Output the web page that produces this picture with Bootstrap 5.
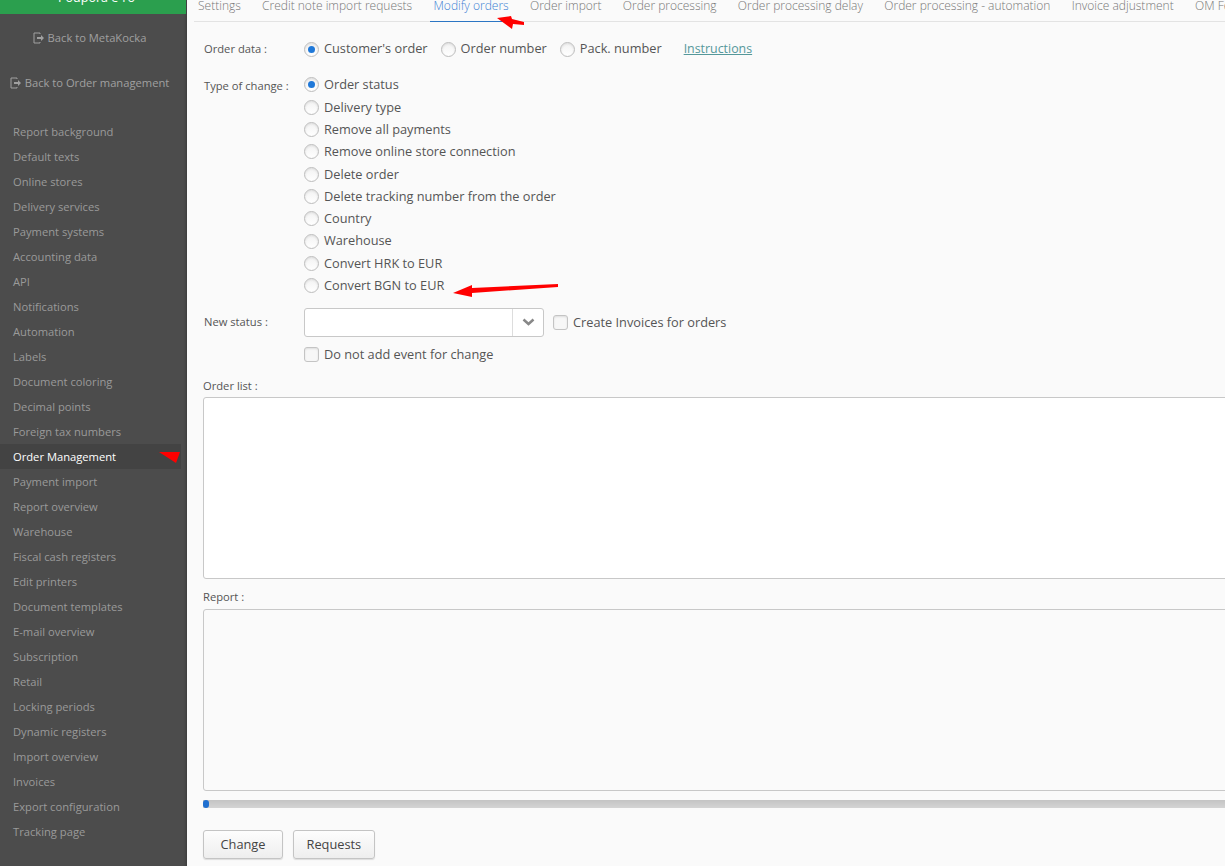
<!DOCTYPE html>
<html lang="en"><head><meta charset="utf-8">
<link href="https://cdn.jsdelivr.net/npm/bootstrap@5.3.0/dist/css/bootstrap.min.css" rel="stylesheet">
<style>
html,body{height:866px;overflow:hidden}
body{font-family:"Open Sans",sans-serif;background:#fafafa;color:#555}
.shell{display:flex;height:866px;overflow:hidden}
.side{width:187px;flex:none;background:#4c4c4c;box-shadow:inset -3px 0 3px -2px #3a3a3a;color:#9a9a9a;font-size:11.2px}
.green{height:14px;background:#2b9f4e;color:#fff;font-size:12.5px;line-height:12px;text-align:center;overflow:hidden;margin-right:1px;padding-left:7px}
.green span{display:block;margin-top:-8px}
.back{display:flex;justify-content:center;align-items:center;gap:3px;height:14px;color:#a0a0a0;white-space:nowrap;padding-right:8px}
.back svg{width:12px;height:12px}
.b1{margin-top:17px}.b2{margin-top:31px;margin-bottom:29px}
.navi{list-style:none;margin:0;padding:0}
.navi li{height:25px;line-height:25px;padding-left:13px;position:relative;margin-right:6px}
.navi li.on{background:#434343;color:#fff;font-weight:500}
.flag{position:absolute;left:159px;top:8px}
.main{flex:1;min-width:0;position:relative;overflow:hidden;padding:0 0 0 16px}
.tabs{display:flex;gap:13.3px;margin:0 0 0 -9px;height:22px;border-bottom:1px solid #e3e3e3;font-size:12px;font-weight:300;color:#777;white-space:nowrap;line-height:12px}
.tabs a{display:block;height:22px;color:#777;text-decoration:none;padding:0 4px}
.tabs a.sel{color:#3d82d4;border-bottom:1px solid #2c76c4}
.lab{width:100px;margin-left:1px;flex:none;font-size:11.2px;color:#555}
.fr{display:flex}
.rad{display:flex;align-items:center;gap:5px;font-size:12.75px;color:#555;white-space:nowrap}
.dot{width:15px;height:15px;border-radius:50%;border:1px solid #bdbdbd;background:linear-gradient(#f2f2f2,#fff);flex:none;display:flex;align-items:center;justify-content:center;box-shadow:inset 0 1px 2px #ddd}
.dot.ck::after{content:"";width:7px;height:7px;border-radius:50%;background:#1f78d8}
.box{width:15px;height:15px;border-radius:3px;border:1px solid #c4c4c4;background:#f7f7f7;flex:none;box-shadow:inset 0 1px 2px #ddd}
.r1{margin-top:19px;height:16px;align-items:center}
.r1 .rad{margin-right:13px}
.lnk{color:#55989a;text-decoration:underline;font-size:12.4px;margin-left:9px}
.r2{margin-top:16.8px}
.radlist{display:flex;flex-direction:column;gap:0}
.radlist .rad{height:22.3px}
.sel2{width:240px;height:29px;background:#fff;border:1px solid #c8c8c8;border-radius:3px;display:flex;justify-content:flex-end}
.sel2 i{display:flex;width:31px;border-left:1px solid #ddd;align-items:center;justify-content:center}
.r3{margin-top:11.2px;align-items:center}
.r3 .rad{margin-left:9px}
.r4{margin-top:8px;margin-left:101px}
.ta{margin-top:4px;width:1100px;border:1px solid #c8c8c8;border-radius:3px;height:182px;background:#fff;display:block;resize:none}
.ta.g{background:#fafafa;margin-top:5px}
.sl{font-size:11.2px;display:block;color:#555;line-height:14px}
.sl.t1{margin-top:15px}.sl.t2{margin-top:11px}
.pbar{margin-top:9px;width:1100px;height:8px;background:linear-gradient(#c4c4c4,#d4d4d4);position:relative}
.pbar::before{content:"";position:absolute;left:0;top:0;width:6px;height:8px;border-radius:3px;background:#1f6fd0}
.btns{display:flex;gap:10px;margin-top:22px}
.bb{height:29px;min-width:80px;padding:0 12.5px;font-size:12.8px;color:#444;border:1px solid #c4c4c4;border-radius:3px;background:linear-gradient(#fdfdfd,#eee);box-shadow:0 1px 1px #ddd;line-height:27px}
.arr{position:absolute;pointer-events:none}
.arr1{left:308px;top:11px}
.arr2{left:264px;top:280px}
</style></head><body>
<div class="shell">
<aside class="side">
<div class="green"><span>Podpora e-ro</span></div>
<div class="back b1"><svg viewBox="0 0 12 12"><path d="M7 2V1H1v10h6v-1" fill="none" stroke="#a0a0a0"/><path d="M4 5h4V3l3 3-3 3V7H4z" fill="#a0a0a0"/></svg>Back to MetaKocka</div>
<div class="back b2"><svg viewBox="0 0 12 12"><path d="M7 2V1H1v10h6v-1" fill="none" stroke="#a0a0a0"/><path d="M4 5h4V3l3 3-3 3V7H4z" fill="#a0a0a0"/></svg>Back to Order management</div>
<ul class="navi">
<li>Report background</li><li>Default texts</li><li>Online stores</li><li>Delivery services</li><li>Payment systems</li><li>Accounting data</li><li>API</li><li>Notifications</li><li>Automation</li><li>Labels</li><li>Document coloring</li><li>Decimal points</li><li>Foreign tax numbers</li>
<li class="on">Order Management<svg class="flag" width="21" height="11" viewBox="0 0 21 11"><path d="M0 0h21l-4 11z" fill="#f00"/></svg></li>
<li>Payment import</li><li>Report overview</li><li>Warehouse</li><li>Fiscal cash registers</li><li>Edit printers</li><li>Document templates</li><li>E-mail overview</li><li>Subscription</li><li>Retail</li><li>Locking periods</li><li>Dynamic registers</li><li>Import overview</li><li>Invoices</li><li>Export configuration</li><li>Tracking page</li>
</ul>
</aside>
<main class="main">
<nav class="tabs"><a href="#">Settings</a><a href="#">Credit note import requests</a><a href="#" class="sel">Modify orders</a><a href="#">Order import</a><a href="#">Order processing</a><a href="#">Order processing delay</a><a href="#">Order processing - automation</a><a href="#">Invoice adjustment</a><a href="#">OM Fees</a></nav>
<div class="fr r1"><div class="lab">Order data :</div>
<label class="rad"><span class="dot ck"></span>Customer's order</label><label class="rad"><span class="dot"></span>Order number</label><label class="rad"><span class="dot"></span>Pack. number</label><a href="#" class="lnk">Instructions</a></div>
<div class="fr r2"><div class="lab pt-1">Type of change :</div>
<div class="radlist">
<label class="rad"><span class="dot ck"></span>Order status</label>
<label class="rad"><span class="dot"></span>Delivery type</label>
<label class="rad"><span class="dot"></span>Remove all payments</label>
<label class="rad"><span class="dot"></span>Remove online store connection</label>
<label class="rad"><span class="dot"></span>Delete order</label>
<label class="rad"><span class="dot"></span>Delete tracking number from the order</label>
<label class="rad"><span class="dot"></span>Country</label>
<label class="rad"><span class="dot"></span>Warehouse</label>
<label class="rad"><span class="dot"></span>Convert HRK to EUR</label>
<label class="rad"><span class="dot"></span>Convert BGN to EUR</label>
</div></div>
<div class="fr r3"><div class="lab">New status :</div><div class="sel2"><i><svg width="13" height="8" viewBox="0 0 13 8"><path d="M1.500 1.500l5 4.500 5-4.500" fill="none" stroke="#888" stroke-width="2.500"/></svg></i></div><label class="rad"><span class="box"></span>Create Invoices for orders</label></div>
<div class="r4"><label class="rad"><span class="box"></span>Do not add event for change</label></div>
<label class="sl t1">Order list :</label>
<textarea class="ta"></textarea>
<label class="sl t2">Report :</label>
<div class="ta g"></div>
<div class="pbar"></div>
<div class="btns"><button class="bb">Change</button><button class="bb">Requests</button></div>
<svg class="arr arr1" width="40" height="24" viewBox="0 0 40 24"><path d="M2 7L16 5l1 3 12 3v3l-11-1-1 5z" fill="#f00"/></svg>
<svg class="arr arr2" width="110" height="20" viewBox="0 0 110 20"><path d="M2 13L21 5v3l86-4v3L21 13v4z" fill="#f00"/></svg>
</main>
</div>
<script src="https://cdn.jsdelivr.net/npm/bootstrap@5.3.0/dist/js/bootstrap.bundle.min.js"></script>
</body></html>
